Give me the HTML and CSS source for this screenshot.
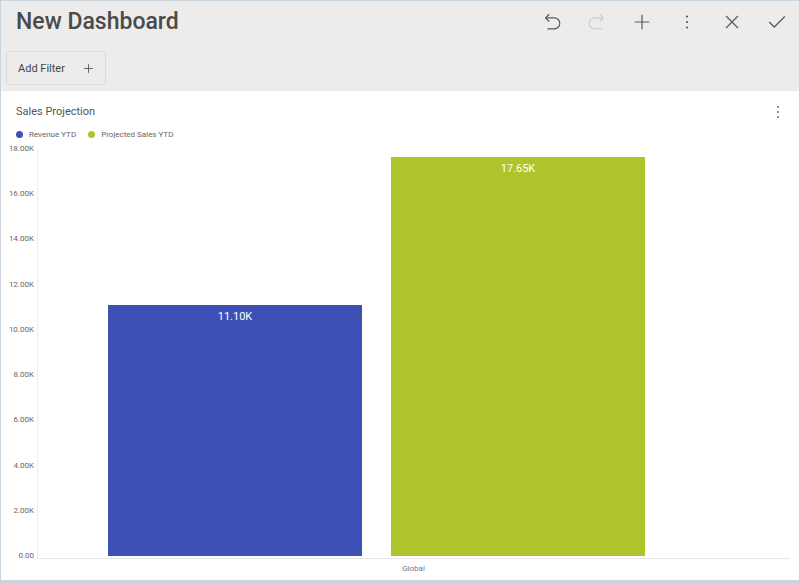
FILE: index.html
```html
<!DOCTYPE html>
<html>
<head>
<meta charset="utf-8">
<link rel="stylesheet" href="styles.css">
</head>
<body>
<div class="frame">
  <header class="header">
    <div class="title-row">
      <h1 class="title">New Dashboard</h1>
      <div class="actions">
        <button class="icon-btn"><svg viewBox="0 0 24 24"><path d="M9 3.5 L5 7.5 L9 11.5 M5 7.5 H14.5 a6 6 0 0 1 0 12 H7"/></svg></button>
        <button class="icon-btn disabled"><svg viewBox="0 0 24 24"><path d="M15 3.5 L19 7.5 L15 11.5 M19 7.5 H9.5 a6 6 0 0 0 0 12 H17"/></svg></button>
        <button class="icon-btn"><svg viewBox="0 0 24 24"><path d="M12 4 V20 M4 12 H20"/></svg></button>
        <button class="icon-btn"><svg viewBox="0 0 24 24" class="fill"><circle cx="12" cy="6" r="1.2"/><circle cx="12" cy="12" r="1.2"/><circle cx="12" cy="18" r="1.2"/></svg></button>
        <button class="icon-btn"><svg viewBox="0 0 24 24"><path d="M5.5 5.5 L18.5 18.5 M18.5 5.5 L5.5 18.5"/></svg></button>
        <button class="icon-btn"><svg viewBox="0 0 24 24"><path d="M3.5 12 L9 17.5 L20.5 6"/></svg></button>
      </div>
    </div>
    <div class="filter-row">
      <button class="filter-btn">Add Filter <svg viewBox="0 0 24 24"><path d="M12 5 V19 M5 12 H19"/></svg></button>
    </div>
  </header>
  <section class="card">
    <div class="card-head">
      <span class="card-title">Sales Projection</span>
      <svg class="kebab" viewBox="0 0 6 14"><circle cx="3" cy="2" r="1"/><circle cx="3" cy="7" r="1"/><circle cx="3" cy="12" r="1"/></svg>
    </div>
    <div class="legend">
      <span class="legend-item"><i class="dot blue"></i>Revenue YTD</span>
      <span class="legend-item"><i class="dot green"></i>Projected Sales YTD</span>
    </div>
    <div class="chart">
      <div class="y-axis">
        <span>18.00K</span><span>16.00K</span><span>14.00K</span><span>12.00K</span><span>10.00K</span>
        <span>8.00K</span><span>6.00K</span><span>4.00K</span><span>2.00K</span><span>0.00</span>
      </div>
      <div class="plot">
        <div class="bar blue" style="height:251px"><span>11.10K</span></div>
        <div class="bar green" style="height:399px"><span>17.65K</span></div>
      </div>
      <div></div>
      <div class="x-label">Global</div>
    </div>
  </section>
</div>
</body>
</html>
```
FILE: styles.css
```css
* { box-sizing: border-box; }
html, body { margin: 0; padding: 0; }
body {
  font-family: Roboto, "Liberation Sans", sans-serif;
  background: #ffffff;
}
.frame {
  width: 800px;
  height: 583px;
  border: 1px solid #c8d5de;
  border-bottom-width: 3px;
  display: flex;
  flex-direction: column;
  overflow: hidden;
}
.header {
  background: #ececec;
  height: 90px;
  flex: none;
}
.title-row {
  display: flex;
  align-items: center;
  justify-content: space-between;
  height: 42px;
}
.title {
  margin: 0;
  padding-left: 15px;
  font-size: 23px;
  font-weight: 500;
  line-height: 40px;
  color: #4a4a4a;
}
.actions {
  display: flex;
  align-items: center;
}
.icon-btn {
  width: 45px;
  height: 28px;
  border: 0;
  padding: 0;
  background: transparent;
  display: flex;
  align-items: center;
  justify-content: center;
}
.icon-btn svg {
  width: 22px;
  height: 22px;
  fill: none;
  stroke: #5a5a5a;
  stroke-width: 1.3;
}
.icon-btn svg.fill {
  fill: #5a5a5a;
  stroke: none;
}
.icon-btn.disabled svg { stroke: #cdcdcd; }
.filter-row {
  padding: 8px 0 0 5px;
}
.filter-btn {
  height: 34px;
  width: 100px;
  border: 1px solid #dcdcdc;
  border-radius: 4px;
  background: #ececec;
  font-family: inherit;
  font-size: 11px;
  color: #444;
  display: flex;
  align-items: center;
  justify-content: space-between;
  padding: 0 9px 0 11px;
}
.filter-btn svg {
  width: 15px;
  height: 15px;
  fill: none;
  stroke: #555;
  stroke-width: 1.4;
}
.card {
  flex: 1;
  background: #fff;
  display: flex;
  flex-direction: column;
}
.card-head {
  display: flex;
  justify-content: space-between;
  align-items: center;
  padding: 12px 18px 0 15px;
  height: 29px;
}
.card-title {
  font-size: 11px;
  color: #555;
  line-height: 16px;
}
.kebab {
  width: 6px;
  height: 14px;
  fill: #666;
}
.legend {
  display: flex;
  gap: 12px;
  margin-top: 8px;
  padding-left: 15px;
  height: 12px;
  align-items: center;
}
.legend-item {
  display: flex;
  align-items: center;
  font-size: 8px;
  color: #666;
}
.dot {
  width: 7px;
  height: 7px;
  border-radius: 50%;
  margin-right: 6px;
}
.dot.blue { background: #3d50b6; }
.dot.green { background: #afc42c; }
.chart {
  margin-top: 4px;
  display: grid;
  grid-template-columns: 36px 1fr;
  grid-template-rows: 417px auto;
}
.y-axis {
  display: flex;
  flex-direction: column;
  justify-content: space-between;
  align-items: flex-end;
  padding-right: 3px;
  font-size: 8px;
  line-height: 10px;
  color: #666;
}
.plot {
  margin: 5px 9px 0 0;
  height: 410px;
  padding: 0 0 2px 70px;
  border-left: 1px solid #ededed;
  border-bottom: 1px solid #e6e6e6;
  display: flex;
  align-items: flex-end;
  gap: 29px;
}
.bar {
  width: 254px;
  display: flex;
  justify-content: center;
  padding-top: 5px;
}
.bar span {
  font-size: 11px;
  line-height: 13px;
  color: #fff;
}
.bar.blue { background: #3d50b6; }
.bar.green { background: #afc42c; }
.x-label {
  margin-right: 9px;
  text-align: center;
  font-size: 8px;
  color: #777;
  padding-top: 3px;
}
```
